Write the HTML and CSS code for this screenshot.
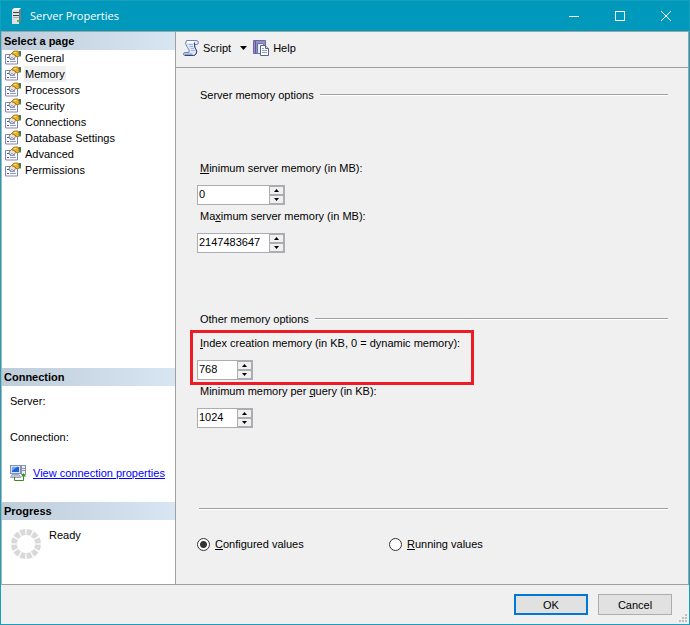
FILE: index.html
```html
<!DOCTYPE html>
<html lang="en">
<head>
    <meta charset="UTF-8">
    <title>Server Properties</title>
    <meta name="viewport" content="width=device-width, initial-scale=1.0">
    <link rel="stylesheet" href="styles.css">
</head>
<body>
    <!-- shared icons -->
    <svg class="defs" width="0" height="0" aria-hidden="true">
        <symbol id="icon-page" viewBox="0 0 16 16">
            <path d="M.5 4.500h12v9.500H.5z" fill="#fbfbff" stroke="#8086b4"/>
            <path d="M2 7.500h2M2 11.500h2" stroke="#4b5aa8"/>
            <path d="M5 9.500h5M5 11.500h6" stroke="#8f98cc"/>
            <path d="M4 6l3-3 4 3-2 3-2-1.500L5 9z" fill="#e6e2d6" stroke="#77736a" stroke-width=".8"/>
            <path d="M6.500 3.500L9 1h4l1.500 5-2.500 1-2-2z" fill="#eeb21e" stroke="#927018" stroke-width=".8"/>
            <path d="M9 2h3l-2 1.500z" fill="#ffe98d"/>
            <path d="M13.500 1H16v5.500h-1.500z" fill="#4f7a4c"/>
        </symbol>
    </svg>

    <header class="titlebar">
        <svg class="app-icon" width="10" height="18" viewBox="0 0 10 18" aria-hidden="true">
            <path d="M0 3l2-2h7v14l-2 2H0z" fill="#6f7d84"/>
            <path d="M0 3h7v14H0z" fill="#dde2e5"/>
            <path d="M0 3l2-2h7L7 3z" fill="#fff"/>
            <path d="M1 5.500h6M1 8.500h6" stroke="#39454b"/>
            <path d="M1 10.500h6" stroke="#a9b2b7"/>
            <rect x="5" y="13" width="2" height="2" fill="#53c636"/>
        </svg>
        <h1>Server Properties</h1>
        <div class="window-buttons">
            <button type="button" aria-label="Minimize">
                <svg width="10" height="10" viewBox="0 0 10 10"><path d="M0 5.500h10"/></svg>
            </button>
            <button type="button" aria-label="Maximize">
                <svg width="10" height="10" viewBox="0 0 10 10"><rect x=".5" y=".5" width="9" height="9"/></svg>
            </button>
            <button type="button" aria-label="Close">
                <svg width="10" height="10" viewBox="0 0 10 10"><path d="M0 0l10 10M10 0L0 10"/></svg>
            </button>
        </div>
    </header>

    <div class="panes">
        <aside class="sidebar">
            <section class="pages">
                <h2>Select a page</h2>
                <ul>
                    <li><svg><use href="#icon-page"/></svg><a href="#">General</a></li>
                    <li><svg><use href="#icon-page"/></svg><a href="#" class="current">Memory</a></li>
                    <li><svg><use href="#icon-page"/></svg><a href="#">Processors</a></li>
                    <li><svg><use href="#icon-page"/></svg><a href="#">Security</a></li>
                    <li><svg><use href="#icon-page"/></svg><a href="#">Connections</a></li>
                    <li><svg><use href="#icon-page"/></svg><a href="#">Database Settings</a></li>
                    <li><svg><use href="#icon-page"/></svg><a href="#">Advanced</a></li>
                    <li><svg><use href="#icon-page"/></svg><a href="#">Permissions</a></li>
                </ul>
            </section>
            <section class="connection">
                <h2>Connection</h2>
                <p>Server:</p>
                <p>Connection:</p>
                <div class="connection-link">
                    <svg width="16" height="16" viewBox="0 0 16 16" aria-hidden="true">
                        <rect x=".5" y=".5" width="10" height="8" fill="#d7e2f5" stroke="#8292b5"/>
                        <rect x="2" y="2" width="7" height="5" fill="#1f62dc"/>
                        <path d="M2 2h5L2 6z" fill="#6ca6f7"/>
                        <path d="M2 9.500h7l2 3H.5z" fill="#b8c3da" stroke="#7886a6" stroke-width=".6"/>
                        <rect x="11.500" y=".5" width="4" height="9" fill="#eef1f7" stroke="#8a94ab"/>
                        <path d="M12 3.500h3M12 5.500h3" stroke="#8a94ab"/>
                        <path d="M4.500 12v3.500h9V10" fill="none" stroke="#3c8a1d"/>
                        <path d="M11 11.500L13.500 8l2.500 3.500z" fill="#3c9a1d"/>
                    </svg>
                    <a href="#">View connection properties</a>
                </div>
            </section>
            <section class="progress">
                <h2>Progress</h2>
                <div class="status">
                    <svg width="30" height="30" viewBox="0 0 30 30" aria-hidden="true">
                        <circle cx="15" cy="15" r="12" pathLength="120" fill="none" stroke="#d9d9d9" stroke-width="6" stroke-dasharray="8 2" stroke-dashoffset="-1"/>
                    </svg>
                    <span>Ready</span>
                </div>
            </section>
        </aside>

        <main>
            <div class="toolbar">
                <button type="button">
                    <svg width="16" height="16" viewBox="0 0 16 16" aria-hidden="true">
                        <path d="M3.500.5H13q2.500 0 2.500 2T13 4.500h-1.500q0 3 1.500 5t0 4.500q-1 1.500-2.500 1.500H2q-1.500 0-1.500-1.500T2 12.500h4Q7 10 4.500 7.500 1 3.500 3.500.5z" fill="#dfe8fa" stroke="#7283b2"/>
                        <path d="M4 1h7v2H4z" fill="#fff"/>
                        <path d="M5.500 4.500H10M6.500 6.500H10M8 8.500h3M8 10.500h4" stroke="#a3b4de"/>
                        <path d="M1 13.500h8l1 1.500H2z" fill="#8ea2d1"/>
                        <path d="M11.500 2.500V5q0 2.500 1.500 4.500t0 4.500q-1 1.500-2.500 1.500H2" fill="none" stroke="#36456f"/>
                    </svg>
                    <span>Script</span>
                </button>
                <button type="button" class="more" aria-label="Script options">
                    <svg width="7" height="4" viewBox="0 0 7 4"><path d="M0 0h7L3.500 4z"/></svg>
                </button>
                <button type="button">
                    <svg width="16" height="16" viewBox="0 0 16 16" aria-hidden="true">
                        <path d="M.5.500h12v13H.5z" fill="#9490cc" stroke="#6c67a5"/>
                        <path d="M2.500 1v12" stroke="#5e5996"/>
                        <path d="M4.500 3.500h5l2 2v8h-7z" fill="#e9eefb" stroke="#65729d"/>
                        <path d="M7.500 5.500h5l3 3v7h-8z" fill="#fff" stroke="#53668f"/>
                        <path d="M12.500 5.500v3h3" fill="#cbd8f1" stroke="#53668f"/>
                        <path d="M9 8.500h2M9 10.500h5M9 12.500h5" stroke="#8aa0cb"/>
                    </svg>
                    <span>Help</span>
                </button>
            </div>

            <form class="options">
                <h3>Server memory options</h3>
                <div class="fields server-fields">
                    <div class="field">
                        <label for="min-memory"><u>M</u>inimum server memory (in MB):</label>
                        <div class="spinner wide">
                            <input type="text" inputmode="numeric" id="min-memory" value="0">
                            <div class="arrows">
                                <button type="button" aria-label="Increase"><svg viewBox="0 0 5 3"><path d="M0 3h5L2.500 0z"/></svg></button>
                                <button type="button" aria-label="Decrease"><svg viewBox="0 0 5 3"><path d="M0 0h5L2.500 3z"/></svg></button>
                            </div>
                        </div>
                    </div>
                    <div class="field">
                        <label for="max-memory">Ma<u>x</u>imum server memory (in MB):</label>
                        <div class="spinner wide">
                            <input type="text" inputmode="numeric" id="max-memory" value="2147483647">
                            <div class="arrows">
                                <button type="button" aria-label="Increase"><svg viewBox="0 0 5 3"><path d="M0 3h5L2.500 0z"/></svg></button>
                                <button type="button" aria-label="Decrease"><svg viewBox="0 0 5 3"><path d="M0 0h5L2.500 3z"/></svg></button>
                            </div>
                        </div>
                    </div>
                </div>

                <h3>Other memory options</h3>
                <div class="fields">
                    <div class="field highlight">
                        <label for="index-memory"><u>I</u>ndex creation memory (in KB, 0 = dynamic memory):</label>
                        <div class="spinner">
                            <input type="text" inputmode="numeric" id="index-memory" value="768">
                            <div class="arrows">
                                <button type="button" aria-label="Increase"><svg viewBox="0 0 5 3"><path d="M0 3h5L2.500 0z"/></svg></button>
                                <button type="button" aria-label="Decrease"><svg viewBox="0 0 5 3"><path d="M0 0h5L2.500 3z"/></svg></button>
                            </div>
                        </div>
                    </div>
                    <div class="field">
                        <label for="query-memory">Minimum memory per <u>q</u>uery (in KB):</label>
                        <div class="spinner">
                            <input type="text" inputmode="numeric" id="query-memory" value="1024">
                            <div class="arrows">
                                <button type="button" aria-label="Increase"><svg viewBox="0 0 5 3"><path d="M0 3h5L2.500 0z"/></svg></button>
                                <button type="button" aria-label="Decrease"><svg viewBox="0 0 5 3"><path d="M0 0h5L2.500 3z"/></svg></button>
                            </div>
                        </div>
                    </div>
                </div>

                <div class="values">
                    <label><input type="radio" name="values" checked><span><u>C</u>onfigured values</span></label>
                    <label><input type="radio" name="values"><span><u>R</u>unning values</span></label>
                </div>
            </form>
        </main>
    </div>

    <footer>
        <button type="button" class="default">OK</button>
        <button type="button">Cancel</button>
        <svg class="grip" width="8" height="8" viewBox="0 0 8 8" aria-hidden="true">
            <path d="M6 0h2v2H6zM3 3h2v2H3zM6 3h2v2H6zM0 6h2v2H0zM3 6h2v2H3zM6 6h2v2H6z"/>
        </svg>
    </footer>
</body>
</html>
```
FILE: styles.css
```css
*, *::before, *::after {
    box-sizing: border-box;
}
body {
    display: flex;
    flex-direction: column;
    min-height: 100vh;
    margin: 0;
    border: 1px solid #189fbe;
    background-color: #f0f0f0;
    color: #000;
    font: 11px/16px "Liberation Sans", Arial, sans-serif;
}
h1, h2, h3, p, ul {
    margin: 0;
    padding: 0;
}
button, input {
    margin: 0;
    padding: 0;
    color: inherit;
    font: inherit;
}
svg {
    display: block;
    flex: none;
}
.defs {
    position: absolute;
}

/* title bar */
.titlebar {
    display: flex;
    align-items: center;
    height: 30px;
    padding-left: 11px;
    background-color: #0099bc;
    color: #fff;
}
.titlebar h1 {
    flex: 1;
    margin-left: 8px;
    font: 11px/16px "Open Sans", "Noto Sans", sans-serif;
}
.window-buttons {
    display: flex;
}
.window-buttons button {
    display: flex;
    align-items: center;
    justify-content: center;
    width: 46px;
    height: 28px;
    border: none;
    background: none;
}
.window-buttons svg {
    fill: none;
    stroke: #fff;
}

.panes {
    display: flex;
    flex: 1;
    border: 1px solid #a0a0a0;
    border-left-color: #b4b4b4;
}

/* left pane */
.sidebar {
    display: flex;
    flex-direction: column;
    width: 174px;
    border-right: 1px solid #a0a0a0;
    background-color: #fff;
}
.sidebar h2 {
    height: 18px;
    padding-left: 2px;
    background: linear-gradient(to right, #bfcddb, #d8e5f2);
    font-size: 11px;
    line-height: 18px;
}
.pages {
    flex: 1;
}
.pages ul {
    list-style: none;
}
.pages li {
    display: flex;
    gap: 3px;
    padding-left: 3px;
}
.pages li svg {
    width: 16px;
    height: 16px;
}
.pages a {
    padding: 0 1px;
    color: #000;
    text-decoration: none;
}
.pages a.current {
    background-color: #f0f0f0;
}
.connection {
    height: 134px;
}
.connection p {
    margin: 7px 0 20px 8px;
}
.connection p + p {
    margin-top: 0;
}
.connection-link {
    display: flex;
    gap: 7px;
    padding-left: 8px;
}
.connection-link a {
    color: #00f;
}
.progress {
    height: 82px;
}
.status {
    display: flex;
    gap: 8px;
    padding: 7px 9px;
}
.status svg {
    margin-top: 2px;
}

/* right pane */
main {
    display: flex;
    flex: 1;
    flex-direction: column;
}
.toolbar {
    display: flex;
    align-items: center;
    height: 36px;
    padding: 0 0 4px 7px;
    border-bottom: 1px solid #a0a0a0;
}
.toolbar button {
    display: flex;
    gap: 4px;
    border: none;
    background: none;
}
.toolbar .more {
    padding: 0 6px 0 9px;
}
.options {
    display: flex;
    flex: 1;
    flex-direction: column;
    padding: 19px 20px 32px 21px;
}
.options h3 {
    display: flex;
    align-items: center;
    gap: 6px;
    padding-left: 3px;
    font-size: 11px;
    font-weight: normal;
}
.options h3::after {
    flex: 1;
    height: 2px;
    border-top: 1px solid #a0a0a0;
    background-color: #fff;
    content: "";
}
.fields {
    padding-top: 8px;
}
.server-fields {
    padding: 57px 0 55px;
}
.field {
    position: relative;
    height: 48px;
}
.field label {
    display: block;
    margin-bottom: 9px;
    padding-left: 3px;
}
.highlight::after {
    position: absolute;
    top: -5px;
    left: -7px;
    width: 284px;
    height: 55px;
    border: 3px solid #ed1c24;
    pointer-events: none;
    content: "";
}
.spinner {
    display: flex;
    width: 56px;
    height: 20px;
    border: 1px solid #abadb3;
    background-color: #fff;
}
.spinner.wide {
    width: 88px;
}
.spinner input {
    flex: 1;
    min-width: 0;
    height: 16px;
    padding-left: 1px;
    border: none;
    outline: none;
    background: none;
}
.arrows {
    display: flex;
    flex-direction: column;
    width: 15px;
}
.arrows button {
    display: flex;
    flex: 1;
    align-items: center;
    justify-content: center;
    border: 1px solid #abadb3;
    background-color: #f0f0f0;
}
.arrows svg {
    width: 5px;
    height: 3px;
}
.values {
    display: flex;
    margin-top: auto;
    margin-left: 2px;
    padding-top: 27px;
    border-top: 1px solid #a0a0a0;
    box-shadow: inset 0 1px #fff;
}
.values label {
    display: flex;
    align-items: center;
    gap: 5px;
    width: 192px;
    margin-left: -2px;
}
.values label + label {
    margin-left: 0;
}
.values input {
    width: 13px;
    height: 13px;
    border: 1px solid #333;
    border-radius: 50%;
    background-color: #fff;
    appearance: none;
}
.values input:checked {
    background: radial-gradient(circle, #333 3px, #fff 4px);
}

/* dialog buttons */
footer {
    display: flex;
    align-items: flex-start;
    justify-content: flex-end;
    gap: 10px;
    height: 39px;
    padding: 9px 2px 0 0;
}
footer button {
    width: 74px;
    height: 21px;
    border: 1px solid #adadad;
    background-color: #e1e1e1;
}
footer .default {
    border: 2px solid #0078d7;
}
.grip {
    align-self: flex-end;
    margin: 0 0 2px -3px;
    fill: #bfbfbf;
}
```
